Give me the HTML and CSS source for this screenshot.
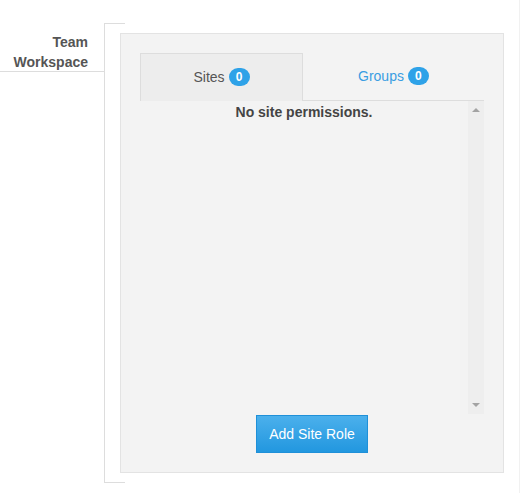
FILE: index.html
```html
<!DOCTYPE html>
<html>
<head>
<meta charset="utf-8">
<link rel="stylesheet" href="styles.css">
</head>
<body>
<div class="page">
  <div class="row">
    <div class="label">Team<br>Workspace</div>
    <div class="bracket">
      <div class="tick"></div>
      <div class="panel">
        <div class="tabs">
          <div class="tab active">Sites <span class="badge">0</span></div>
          <div class="tab">Groups <span class="badge">0</span></div>
        </div>
        <div class="content">
          <div class="list">
            <div class="empty">No site permissions.</div>
          </div>
          <div class="scrollbar">
            <span class="arrow up"></span>
            <span class="arrow down"></span>
          </div>
        </div>
        <div class="actions">
          <button class="btn">Add Site Role</button>
        </div>
      </div>
      <div class="tick"></div>
    </div>
  </div>
</div>
</body>
</html>
```

FILE: styles.css
```css
* { box-sizing: border-box; }
html, body { margin: 0; padding: 0; background: #fff; }
body { font-family: "Liberation Sans", Arial, sans-serif; font-size: 14px; color: #555; }
.page {
  width: 520px;
  height: 493px;
  border-right: 1px solid #f1f1f1;
  padding-top: 23px;
}
.row { display: flex; align-items: flex-start; }
.label {
  width: 104px;
  margin-top: 9px;
  height: 40px;
  padding-right: 16px;
  text-align: right;
  font-weight: bold;
  line-height: 20px;
  color: #555;
  border-bottom: 1px solid #ddd;
}
.bracket {
  border-left: 1px solid #ddd;
  display: flex;
  flex-direction: column;
}
.tick { width: 20px; height: 1px; background: #ddd; }
.panel {
  margin: 9px 0 9px 15px;
  width: 384px;
  height: 440px;
  background: #f3f3f3;
  border: 1px solid #e3e3e3;
  padding: 19px 19px 19px 19px;
  display: flex;
  flex-direction: column;
}
.tabs { display: flex; height: 48px; }
.tab {
  display: flex;
  align-items: center;
  justify-content: center;
  gap: 4px;
  border-bottom: 1px solid #ddd;
  color: #3a9de2;
}
.tab:first-child { width: 163px; }
.tab:last-child { flex: 1; }
.tab.active {
  background: #ededed;
  border: 1px solid #ddd;
  border-bottom: none;
  color: #555;
}
.badge {
  display: inline-block;
  min-width: 21px;
  height: 18px;
  line-height: 18px;
  padding: 0 6px;
  border-radius: 9px;
  background: #2ea2e8;
  color: #fff;
  font-size: 12px;
  font-weight: bold;
  text-align: center;
}
.content { display: flex; height: 314px; }
.list { flex: 1; }
.empty {
  text-align: center;
  font-weight: bold;
  color: #444;
  line-height: 20px;
  padding-top: 1px;
}
.scrollbar {
  width: 16px;
  background: #eeeeee;
  display: flex;
  flex-direction: column;
  justify-content: space-between;
  align-items: center;
  padding: 7px 0 7px;
}
.arrow { width: 0; height: 0; border-left: 4px solid transparent; border-right: 4px solid transparent; }
.arrow.up { border-bottom: 4px solid #a3a3a3; }
.arrow.down { border-top: 4px solid #a3a3a3; }
.actions { display: flex; justify-content: center; padding-top: 1px; }
.btn {
  width: 112px;
  height: 38px;
  border: 1px solid #1f90d8;
  background: linear-gradient(#4bb0ec, #2297df);
  color: #fff;
  font-family: "Liberation Sans", Arial, sans-serif;
  font-size: 14px;
  padding: 0;
  cursor: pointer;
}
```
